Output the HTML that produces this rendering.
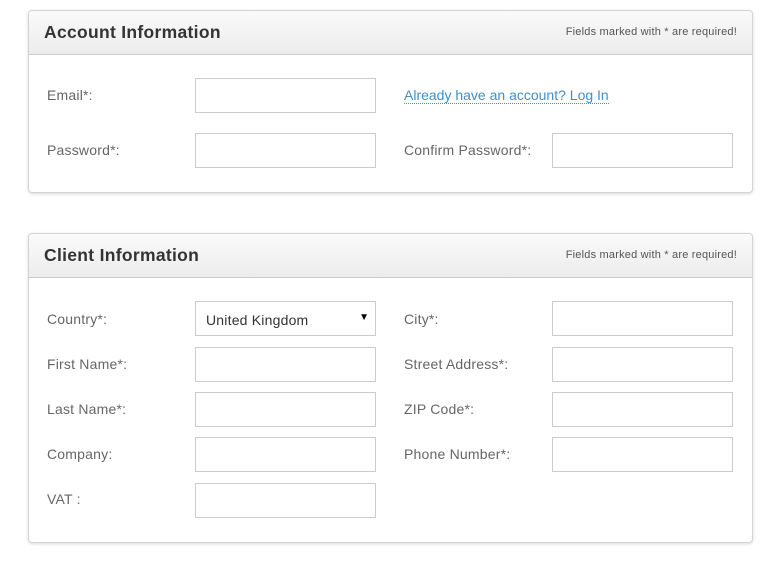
<!DOCTYPE html>
<html><head><style>
body{margin:0;background:#fff;font-family:"Liberation Sans",sans-serif;width:770px;height:561px;position:relative;overflow:hidden}
.p{position:absolute;left:28px;width:723px;border:1px solid #d4d4d4;border-radius:4px;box-shadow:0 1px 3px rgba(0,0,0,.15);background:#fff}
.h{height:43px;border-bottom:1px solid #ccc;background:linear-gradient(#fafafa,#ececec);border-radius:4px 4px 0 0;position:relative}
.h b{position:absolute;left:15px;top:11px;font-size:17.5px;color:#333;letter-spacing:0.3px}
.h span{position:absolute;right:15px;top:15px;font-size:11px;color:#555;letter-spacing:0.2px}
.l{position:absolute;font-size:14px;color:#666;letter-spacing:0.2px}
.i{position:absolute;width:179px;height:33px;border:1px solid #ccc;background:#fff}
a{position:absolute;font-size:14px;color:#3f8fce;text-decoration:none;border-bottom:1px dotted #3f8fce;line-height:16px}
</style></head><body>
<div class="p" style="top:10px;height:181px">
<div class="h"><b>Account Information</b><span>Fields marked with * are required!</span></div>
</div>
<div class="l" style="left:47px;top:87px">Email*:</div>
<div class="i" style="left:195px;top:78px"></div>
<a style="left:404px;top:87px">Already have an account? Log In</a>
<div class="l" style="left:47px;top:142px">Password*:</div>
<div class="i" style="left:195px;top:133px"></div>
<div class="l" style="left:404px;top:142px">Confirm Password*:</div>
<div class="i" style="left:552px;top:133px"></div>

<div class="p" style="top:233px;height:308px">
<div class="h"><b>Client Information</b><span>Fields marked with * are required!</span></div>
</div>
<div class="l" style="left:47px;top:311px">Country*:</div>
<div class="i" style="left:195px;top:301px"><span style="position:absolute;left:10px;top:10px;font-size:14px;color:#333;letter-spacing:0.2px">United Kingdom</span><span style="position:absolute;right:6px;top:10px;font-size:10px;color:#000">▼</span></div>
<div class="l" style="left:404px;top:311px">City*:</div>
<div class="i" style="left:552px;top:301px"></div>
<div class="l" style="left:47px;top:356px">First Name*:</div>
<div class="i" style="left:195px;top:347px"></div>
<div class="l" style="left:404px;top:356px">Street Address*:</div>
<div class="i" style="left:552px;top:347px"></div>
<div class="l" style="left:47px;top:401px">Last Name*:</div>
<div class="i" style="left:195px;top:392px"></div>
<div class="l" style="left:404px;top:401px">ZIP Code*:</div>
<div class="i" style="left:552px;top:392px"></div>
<div class="l" style="left:47px;top:446px">Company:</div>
<div class="i" style="left:195px;top:437px"></div>
<div class="l" style="left:404px;top:446px">Phone Number*:</div>
<div class="i" style="left:552px;top:437px"></div>
<div class="l" style="left:47px;top:491px">VAT :</div>
<div class="i" style="left:195px;top:483px"></div>
</body></html>
